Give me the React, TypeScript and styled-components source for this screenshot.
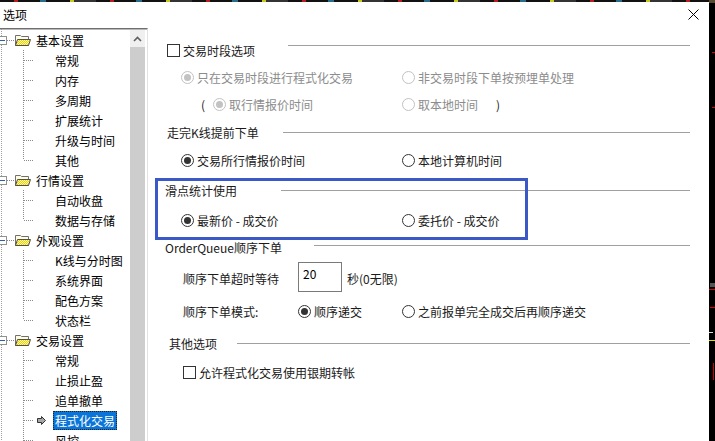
import React from 'react';
import styled, { createGlobalStyle } from 'styled-components';

const Global = createGlobalStyle`
  html, body { margin: 0; padding: 0; background: #000; }
  body {
    width: 715px; height: 441px; overflow: hidden;
    font-family: "Noto Sans CJK SC", "Microsoft YaHei", "Noto Sans", sans-serif;
    font-size: 12px; color: #1a1a1a;
  }
  #root { height: 441px; }
`;

const Screen = styled.div`
  display: flex;
  width: 715px;
  height: 441px;
  overflow: hidden;
  background: #000;
`;

const Dialog = styled.div`
  width: 709px;
  height: 441px;
  flex: none;
  display: flex;
  flex-direction: column;
  background: #fff;
  overflow: hidden;
`;

const ChartStrip = styled.div`
  flex: 1;
  background: #000;
  display: flex;
`;

const TopNoise = styled.div`
  height: 2px;
  flex: none;
  background: repeating-linear-gradient(
    to right,
    #111 0 14px, #b02020 14px 18px, #111 18px 40px, #2a6a8a 40px 46px,
    #111 46px 70px, #c8c820 70px 74px, #333 74px 96px
  );
`;

const TitleBar = styled.div`
  height: 26px;
  flex: none;
  display: flex;
  align-items: center;
  justify-content: space-between;
  padding: 0 10px 2px 3px;
  box-sizing: border-box;
  font-size: 12px;
  color: #000;
`;

const Body = styled.div`
  flex: 1;
  min-height: 0;
  display: flex;
`;

const TreePanel = styled.div`
  width: 148px;
  flex: none;
  box-sizing: border-box;
  display: flex;
  padding-right: 2px;
  border-top: 1px solid #6f6f6f;
  border-right: 1px solid #e2e2e2;
  box-shadow: inset 0 1px 0 #b8b8b8;
`;

const TreeList = styled.div`
  flex: 1;
  min-width: 0;
  padding-top: 1px;
  overflow: hidden;
  background: repeating-linear-gradient(to bottom, #a0a0a0 0 1px, transparent 1px 2px) 1px 0 / 1px 100% no-repeat;
`;

const Scrollbar = styled.div`
  width: 15px;
  flex: none;
  display: flex;
  flex-direction: column;
  padding-top: 1px;
`;

const ScrollUp = styled.div`
  height: 17px;
  flex: none;
  background: #f0f0f0;
  display: flex;
  align-items: center;
  justify-content: center;
`;

const ScrollThumb = styled.div`
  flex: 1;
  background: #cdcdcd;
`;

const RootRow = styled.div`
  height: 20px;
  display: flex;
  align-items: center;
  color: #000;
  font-size: 12px;
  white-space: nowrap;
`;

const ExpandBox = styled.span`
  width: 9px;
  height: 9px;
  box-sizing: border-box;
  margin-left: -2px;
  border: 1px solid #919191;
  background: #fff;
  display: flex;
  align-items: center;
  justify-content: center;
  flex: none;
  &::after {
    content: '';
    width: 5px;
    height: 1px;
    background: #2d5fa6;
  }
`;

const HDots = styled.span<{ $w: number }>`
  width: ${p => p.$w}px;
  height: 1px;
  flex: none;
  background: repeating-linear-gradient(to right, #8a8a8a 0 1px, transparent 1px 2px);
`;

const RootLabel = styled.span`
  margin-left: 5px;
`;

const ChildRow = styled.div`
  height: 20px;
  display: flex;
  align-items: center;
  padding-left: 23px;
  white-space: nowrap;
  color: #000;
`;

const Connector = styled.span<{ $last?: boolean }>`
  width: 11px;
  height: 20px;
  flex: none;
  background:
    repeating-linear-gradient(to bottom, #8a8a8a 0 1px, transparent 1px 2px) 0 0 / 1px ${p => (p.$last ? '10px' : '20px')} no-repeat,
    repeating-linear-gradient(to right, #8a8a8a 0 1px, transparent 1px 2px) 1px 10px / 10px 1px no-repeat;
`;

const ArrowSlot = styled.span`
  width: 19px;
  height: 20px;
  flex: none;
  display: flex;
  align-items: center;
  padding-left: 3px;
  box-sizing: border-box;
`;

const ChildLabel = styled.span<{ $selected?: boolean }>`
  display: inline-block;
  height: 19px;
  line-height: 17px;
  box-sizing: border-box;
  padding: 0 1px;
  border: 1px dotted ${p => (p.$selected ? '#f5a623' : 'transparent')};
  background: ${p => (p.$selected ? '#0a74d8' : 'transparent')};
  color: ${p => (p.$selected ? '#fff' : '#000')};
  outline: ${p => (p.$selected ? '1px dotted #222' : 'none')};
  outline-offset: -1px;
`;

const Content = styled.div`
  flex: 1;
  min-width: 0;
  position: relative;
  display: flex;
  flex-direction: column;
  padding-right: 19px;
  font-size: 12px;
`;

const HeaderRow = styled.div<{ $mt: number; $indent: number }>`
  height: 20px;
  flex: none;
  margin-top: ${p => p.$mt}px;
  padding-left: ${p => p.$indent}px;
  display: flex;
  align-items: center;
  color: #1a1a1a;
`;

const HeaderLabel = styled.div<{ $w: number }>`
  width: ${p => p.$w}px;
  flex: none;
  display: flex;
  align-items: center;
  gap: 3px;
  white-space: nowrap;
`;

const HeaderLine = styled.div<{ $y: number }>`
  flex: 1;
  height: 20px;
  background: linear-gradient(#a0a0a0, #a0a0a0) 0 ${p => p.$y}px / 100% 1px no-repeat;
`;

const GridRow = styled.div<{ $mt: number; $indent: number; $cols: string; $h?: number }>`
  height: ${p => p.$h ?? 20}px;
  flex: none;
  margin-top: ${p => p.$mt}px;
  padding-left: ${p => p.$indent}px;
  display: grid;
  grid-template-columns: ${p => p.$cols};
  align-items: center;
  white-space: nowrap;
`;

const Cell = styled.div`
  display: flex;
  align-items: center;
`;

const Paren = styled.span<{ $gap: number }>`
  color: #1a1a1a;
  margin-right: ${p => p.$gap}px;
`;

const CloseParen = styled.span`
  color: #1a1a1a;
  margin-left: 18px;
`;

const OptionWrap = styled.span<{ $disabled?: boolean }>`
  display: inline-flex;
  align-items: center;
  gap: 3px;
  color: ${p => (p.$disabled ? '#8c8c8c' : '#1a1a1a')};
`;

const RadioCircle = styled.span<{ $checked?: boolean; $disabled?: boolean }>`
  width: 13px;
  height: 13px;
  box-sizing: border-box;
  border-radius: 50%;
  border: 1px solid ${p => (p.$disabled ? '#c2c2c2' : '#333')};
  background: #fff;
  display: inline-flex;
  align-items: center;
  justify-content: center;
  flex: none;
  &::after {
    content: '';
    width: 7px;
    height: 7px;
    border-radius: 50%;
    background: ${p => (p.$checked ? (p.$disabled ? '#c2c2c2' : '#333') : 'transparent')};
  }
`;

const CheckSquare = styled.span`
  width: 13px;
  height: 13px;
  box-sizing: border-box;
  border: 1px solid #333;
  background: #fff;
  flex: none;
`;

const FieldLabel = styled.span<{ $pt?: number }>`
  color: #1a1a1a;
  padding-top: ${p => p.$pt ?? 0}px;
`;

const NumberBox = styled.div`
  width: 44px;
  height: 30px;
  box-sizing: border-box;
  border: 1px solid #7a7a7a;
  padding: 3px 0 0 4px;
  line-height: 16px;
  color: #000;
  background: #fff;
`;

const Unit = styled.span`
  margin-left: 5px;
  padding-top: 3px;
  color: #1a1a1a;
`;

const Highlight = styled.div`
  position: absolute;
  left: 7px;
  top: 150px;
  width: 373px;
  height: 62px;
  box-sizing: border-box;
  border: 3px solid #3a58c6;
  pointer-events: none;
`;

const Folder = () => (
  <svg width="16" height="13" viewBox="0 0 16 13" style={{ flex: 'none' }}>
    <defs>
      <pattern id="chk" width="2" height="2" patternUnits="userSpaceOnUse">
        <rect width="2" height="2" fill="#fff6b0" />
        <rect width="1" height="1" fill="#e8d200" />
        <rect x="1" y="1" width="1" height="1" fill="#e8d200" />
      </pattern>
    </defs>
    <path d="M0.5 11.5 V1.5 H5.5 L6.5 2.5 H13.5 V11.5 Z" fill="#fffbe0" stroke="#707070" />
    <path d="M0.5 11.5 L2.5 5.5 H15.5 L13.5 11.5 Z" fill="url(#chk)" stroke="#505050" />
  </svg>
);

const SelArrow = () => (
  <svg width="9" height="9" viewBox="0 0 9 9">
    <path d="M0.5 2.5 H4.5 V0.5 L8.5 4.5 L4.5 8.5 V6.5 H0.5 Z" fill="#a8a8a8" stroke="#333" />
  </svg>
);

const ChevronUp = () => (
  <svg width="9" height="6" viewBox="0 0 9 6">
    <path d="M1 5 L4.5 1.5 L8 5" fill="none" stroke="#606060" strokeWidth="1.6" />
  </svg>
);

const CloseIcon = () => (
  <svg width="11" height="11" viewBox="0 0 11 11">
    <path d="M0.5 0.5 L10.5 10.5 M10.5 0.5 L0.5 10.5" stroke="#000" strokeWidth="1" />
  </svg>
);

const ChartTicks = () => (
  <svg width="6" height="441" viewBox="0 0 6 441">
    <rect x="0" y="0" width="6" height="3" fill="#5a4a30" />
    <rect x="3" y="52" width="3" height="1" fill="#d00" />
    <rect x="3" y="107" width="3" height="1" fill="#d00" />
    <rect x="1" y="283" width="5" height="4" fill="#555" />
    <rect x="0" y="289" width="6" height="1" fill="#d00" />
    <rect x="1" y="307" width="5" height="1" fill="#d00" />
    <rect x="0" y="332" width="4" height="1" fill="#ddd" />
    <rect x="0" y="340" width="6" height="1" fill="#dd0" />
    <rect x="4" y="363" width="1" height="17" fill="#c00" />
  </svg>
);

const Radio = ({ label, checked, disabled }: { label: string; checked?: boolean; disabled?: boolean }) => (
  <OptionWrap $disabled={disabled}>
    <RadioCircle $checked={checked} $disabled={disabled} />
    {label}
  </OptionWrap>
);

const Checkbox = ({ label }: { label: string }) => (
  <OptionWrap>
    <CheckSquare />
    {label}
  </OptionWrap>
);

const Header = ({
  mt, indent, lineStart, lineY = 10, children,
}: { mt: number; indent: number; lineStart: number; lineY?: number; children: React.ReactNode }) => (
  <HeaderRow $mt={mt} $indent={indent}>
    <HeaderLabel $w={lineStart - indent}>{children}</HeaderLabel>
    <HeaderLine $y={lineY} />
  </HeaderRow>
);

type Group = { title: string; items: string[]; selected?: number; open?: boolean };

const groups: Group[] = [
  { title: '基本设置', items: ['常规', '内存', '多周期', '扩展统计', '升级与时间', '其他'] },
  { title: '行情设置', items: ['自动收盘', '数据与存储'] },
  { title: '外观设置', items: ['K线与分时图', '系统界面', '配色方案', '状态栏'] },
  { title: '交易设置', items: ['常规', '止损止盈', '追单撤单', '程式化交易', '风控'], selected: 3, open: true },
];

export default function App() {
  return (
    <Screen>
      <Global />
      <Dialog>
        <TopNoise />
        <TitleBar>
          <span>选项</span>
          <CloseIcon />
        </TitleBar>
        <Body>
          <TreePanel>
            <TreeList>
              {groups.map(g => (
                <React.Fragment key={g.title}>
                  <RootRow>
                    <ExpandBox />
                    <HDots $w={8} />
                    <Folder />
                    <RootLabel>{g.title}</RootLabel>
                  </RootRow>
                  {g.items.map((it, i) => (
                    <ChildRow key={it + i}>
                      <Connector $last={!g.open && i === g.items.length - 1} />
                      <ArrowSlot>{g.selected === i ? <SelArrow /> : null}</ArrowSlot>
                      <ChildLabel $selected={g.selected === i}>{it}</ChildLabel>
                    </ChildRow>
                  ))}
                </React.Fragment>
              ))}
            </TreeList>
            <Scrollbar>
              <ScrollUp>
                <ChevronUp />
              </ScrollUp>
              <ScrollThumb />
            </Scrollbar>
          </TreePanel>
          <Content>
            <Header mt={12} indent={19} lineStart={140} lineY={5}>
              <CheckSquare />
              <span>交易时段选项</span>
            </Header>
            <GridRow $mt={7} $indent={33} $cols="221px auto">
              <Cell><Radio label="只在交易时段进行程式化交易" checked disabled /></Cell>
              <Cell><Radio label="非交易时段下单按预埋单处理" disabled /></Cell>
            </GridRow>
            <GridRow $mt={7} $indent={53} $cols="201px auto">
              <Cell>
                <Paren $gap={8}>(</Paren>
                <Radio label="取行情报价时间" checked disabled />
              </Cell>
              <Cell>
                <Radio label="取本地时间" disabled />
                <CloseParen>)</CloseParen>
              </Cell>
            </GridRow>
            <Header mt={8} indent={19} lineStart={135}>
              <span>走完K线提前下单</span>
            </Header>
            <GridRow $mt={8} $indent={33} $cols="221px auto">
              <Cell><Radio label="交易所行情报价时间" checked /></Cell>
              <Cell><Radio label="本地计算机时间" /></Cell>
            </GridRow>
            <Header mt={10} indent={17} lineStart={133}>
              <span>滑点统计使用</span>
            </Header>
            <GridRow $mt={10} $indent={33} $cols="221px auto">
              <Cell><Radio label="最新价 - 成交价" checked /></Cell>
              <Cell><Radio label="委托价 - 成交价" /></Cell>
            </GridRow>
            <Header mt={7} indent={17} lineStart={166} lineY={8}>
              <span>OrderQueue顺序下单</span>
            </Header>
            <GridRow $mt={5} $indent={35} $cols="115px auto" $h={30}>
              <Cell><FieldLabel $pt={3}>顺序下单超时等待</FieldLabel></Cell>
              <Cell>
                <NumberBox>20</NumberBox>
                <Unit>秒(0无限)</Unit>
              </Cell>
            </GridRow>
            <GridRow $mt={9} $indent={35} $cols="115px 104px auto">
              <Cell><FieldLabel>顺序下单模式:</FieldLabel></Cell>
              <Cell><Radio label="顺序递交" checked /></Cell>
              <Cell><Radio label="之前报单完全成交后再顺序递交" /></Cell>
            </GridRow>
            <Header mt={12} indent={21} lineStart={89}>
              <span>其他选项</span>
            </Header>
            <GridRow $mt={9} $indent={35} $cols="auto">
              <Cell><Checkbox label="允许程式化交易使用银期转帐" /></Cell>
            </GridRow>
            <Highlight />
          </Content>
        </Body>
      </Dialog>
      <ChartStrip>
        <ChartTicks />
      </ChartStrip>
    </Screen>
  );
}
